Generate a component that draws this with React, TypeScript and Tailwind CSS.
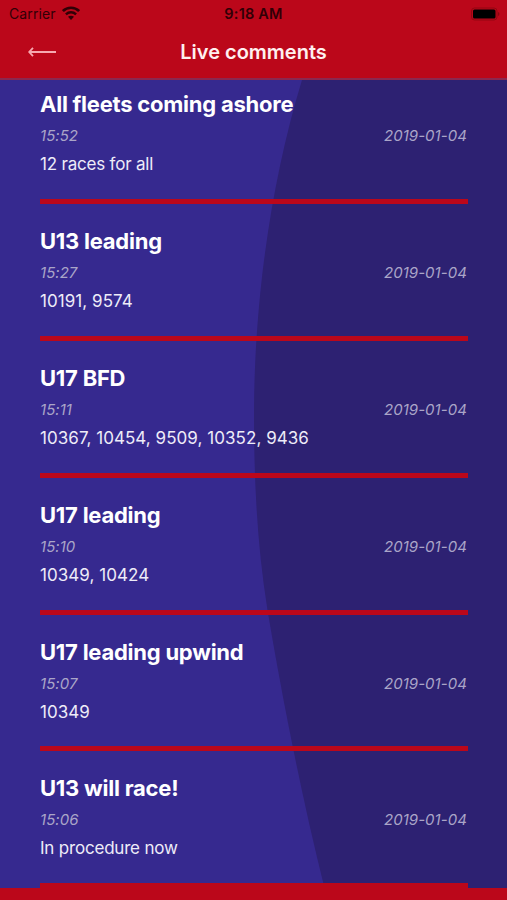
import { clsx } from 'clsx';

type Comment = {
  title: string;
  time: string;
  date: string;
  text: string;
};

const comments: Comment[] = [
  { title: 'All fleets coming ashore', time: '15:52', date: '2019-01-04', text: '12 races for all' },
  { title: 'U13 leading', time: '15:27', date: '2019-01-04', text: '10191, 9574' },
  { title: 'U17 BFD', time: '15:11', date: '2019-01-04', text: '10367, 10454, 9509, 10352, 9436' },
  { title: 'U17 leading', time: '15:10', date: '2019-01-04', text: '10349, 10424' },
  { title: 'U17 leading upwind', time: '15:07', date: '2019-01-04', text: '10349' },
  { title: 'U13 will race!', time: '15:06', date: '2019-01-04', text: 'In procedure now' },
];

function StatusBar() {
  return (
    <div className="grid h-[27px] grid-cols-[1fr_auto_1fr] items-center pr-[7px] pl-[7px] text-[14px] text-[#310006]">
      <div className="flex items-center gap-[6px] pl-0.5">
        <span className="tracking-[0.1px]">Carrier</span>
        <svg className="-mt-0.5" width="18" height="14" viewBox="0 0 18 14" fill="none" stroke="currentColor">
          <path d="M.9 5.1C5.3.6 12.7.6 17.1 5.1" strokeWidth="2.7" />
          <path d="M3.9 8.4c2.9-2.8 7.3-2.8 10.2 0" strokeWidth="2.4" />
          <path d="M9 13.9 6 10.8c1.6-1.5 4.4-1.5 6 0z" fill="currentColor" stroke="none" />
        </svg>
      </div>
      <span className="text-center text-[14.5px] font-semibold tracking-[0.2px]">9:18 AM</span>
      <svg className="justify-self-end" width="30" height="14" viewBox="0 0 30 14">
        <rect x="1.5" y="1" width="25.5" height="12" rx="3" fill="none" stroke="#930611" />
        <rect x="3" y="2.5" width="22.5" height="9" rx="1.5" fill="#000" />
        <path d="M28.2 5v4c1.6-.6 1.6-3.4 0-4z" fill="#7d0610" />
      </svg>
    </div>
  );
}

function Header() {
  return (
    <header className="h-[80px] shrink-0 border-b-2 border-[#8b2850] bg-[#bb071a]">
      <StatusBar />
      <div className="grid h-[50px] grid-cols-[80px_1fr_80px] items-center">
        <button type="button" aria-label="Back" className="pl-[28px]">
          <svg width="28" height="10" viewBox="0 0 28 10" fill="none" stroke="#f7a9b0" strokeWidth="1.8">
            <path d="M5 .9 1.2 5 5 9.1M1.2 5H28" />
          </svg>
        </button>
        <h1 className="text-center text-[20px] leading-7 font-semibold text-[#fff0f0]">Live comments</h1>
      </div>
    </header>
  );
}

function CommentItem({ comment }: { comment: Comment }) {
  const hasWords = /[a-z]/i.test(comment.text);

  return (
    <li className="h-[136.8px] border-b-[5px] border-[#bb071a] pt-[21px]">
      <h2 className="text-[22px] leading-8 font-bold tracking-[-0.24px] text-white">{comment.title}</h2>
      <div className="flex justify-between pr-px text-[15px] leading-[31px] tracking-[0.05px] text-[#aaa5c8] italic">
        <span>{comment.time}</span>
        <span>{comment.date}</span>
      </div>
      <p
        className={clsx(
          'text-[17px] leading-[26px] text-[#eeecf8]',
          hasWords ? 'tracking-[-0.2px]' : 'tracking-[0.05px]'
        )}
      >
        {comment.text}
      </p>
    </li>
  );
}

export default function App() {
  return (
    <div className="flex h-[900px] w-[507px] flex-col overflow-hidden bg-[#bb071a] font-['Inter',sans-serif]">
      <Header />
      <main className="relative h-[808px] bg-[#36298f]">
        <svg className="absolute inset-0" width="507" height="808" viewBox="0 0 507 808">
          <path
            d="M302 0C270 105 254 225 254 335C254 400 257 465 267.5 530C280 605 300 710 324.5 808H507V0Z"
            fill="#2d2172"
          />
        </svg>
        <ul className="relative -mt-[12.65px] ml-[40px] w-[428px]">
          {comments.map((comment) => (
            <CommentItem key={comment.time} comment={comment} />
          ))}
        </ul>
      </main>
    </div>
  );
}
